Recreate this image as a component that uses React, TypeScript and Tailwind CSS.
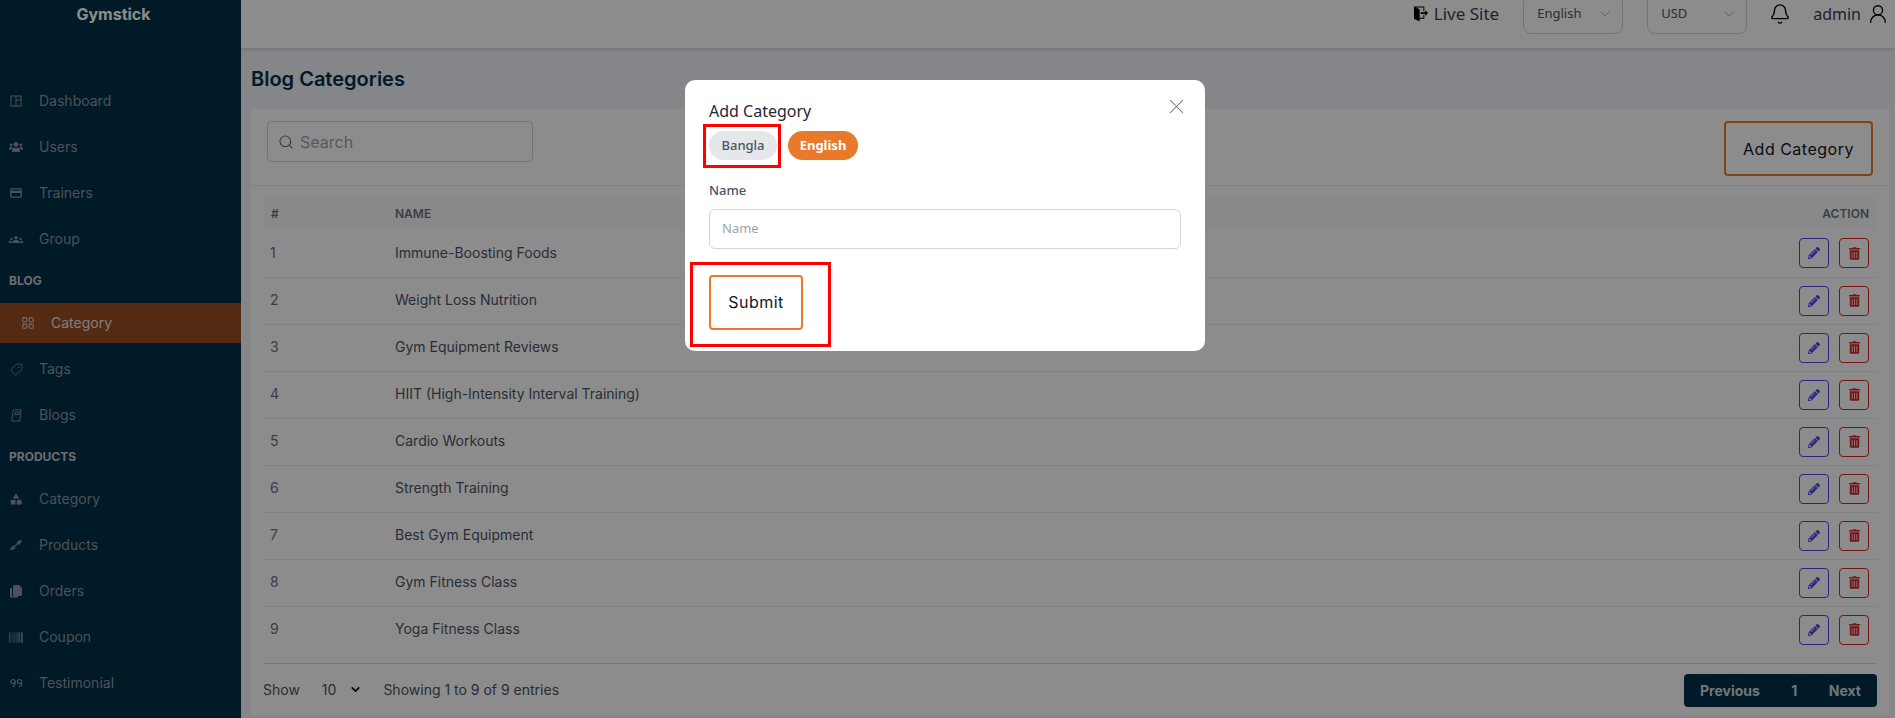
import React from 'react';
import { Bell, ChevronDown, LayoutGrid, Search, Tag, UserRound, X } from 'lucide-react';
import { FaBarcode, FaPencilAlt, FaTrashAlt, FaUsers } from 'react-icons/fa';
import { ImExit } from 'react-icons/im';
import { MdCategory, MdCreditCard, MdGroups } from 'react-icons/md';

function DashIcon() {
  return (
    <svg viewBox="0 0 12 12" className="w-[12px] h-[12px]" fill="none" stroke="currentColor" strokeWidth="1">
      <rect x="1" y="1" width="10" height="10" />
      <path d="M6 1v10M6 5h5" />
    </svg>
  );
}

function BlogIcon() {
  return (
    <svg viewBox="0 0 14 14" className="w-[13px] h-[13px]" fill="none" stroke="currentColor" strokeWidth="1">
      <path d="M3.500 1h8.500l-1.500 12h-8.500l1-8zM5.500 3.500h4.500l-.3 2.500h-4.500z" />
    </svg>
  );
}

function BarbellIcon() {
  return (
    <svg viewBox="0 0 14 14" className="w-[14px] h-[14px]" fill="none" stroke="currentColor" strokeWidth="1.2">
      <path d="M1 12L13 2M3 8l3 3M2 9.500l2 2.500M8 3.500l3 3M9.500 2.500l2.500 2.500" />
    </svg>
  );
}

function OrdersIcon() {
  return (
    <svg viewBox="0 0 14 14" className="w-[14px] h-[14px]" fill="currentColor">
      <path d="M5 1h5l3 3v7a1 1 0 0 1-1 1H5a1 1 0 0 1-1-1V2a1 1 0 0 1 1-1z" />
      <path d="M1 4h2v8h6v1.500H2a1 1 0 0 1-1-1z" />
    </svg>
  );
}

function QuoteIcon() {
  return (
    <svg viewBox="0 0 14 10" className="w-[13px] h-[10px]" fill="none" stroke="currentColor" strokeWidth="1.2">
      <path d="M5.500 3.500a2 2 0 1 1-4.500 0a2 2 0 0 1 4.500 0v2c0 1.500-1 3-2.500 3.500M12.500 3.500a2 2 0 1 1-4.500 0a2 2 0 0 1 4.500 0v2c0 1.500-1 3-2.500 3.500" />
    </svg>
  );
}

function NavRow({ icon, label }: { icon: React.ReactNode; label: string }) {
  return (
    <div className="h-[46px] flex items-center pl-[9px]">
      <span className="w-[14px] flex justify-center shrink-0">{icon}</span>
      <span className="ml-[16px] pb-[1px] text-[14px] text-[#8a96a3]">{label}</span>
    </div>
  );
}

function SectionLabel({ label, h }: { label: string; h: string }) {
  return <div className={`${h} flex items-center pl-[9px] text-[12px] font-bold text-[#c4c8cc]`}>{label}</div>;
}

function Sidebar() {
  return (
    <aside className="w-[241px] shrink-0 h-full bg-[#003049] text-[#8a96a3] overflow-hidden">
      <div className="h-[28px] flex items-center justify-center pr-[14px] text-[16px] font-bold text-white">Gymstick</div>
      <div className="h-[50px]" />
      <NavRow icon={<DashIcon />} label="Dashboard" />
      <NavRow icon={<FaUsers className="w-[14px] h-[14px]" />} label="Users" />
      <NavRow icon={<MdCreditCard className="w-[14px] h-[14px]" />} label="Trainers" />
      <NavRow icon={<MdGroups className="w-[15px] h-[15px]" />} label="Group" />
      <SectionLabel label="BLOG" h="h-[41px] pb-[3px]" />
      <div className="h-[40px] mb-[3px] flex items-center pl-[21px] bg-[#9a4e21] text-[#e6e6e6]">
        <LayoutGrid className="w-[14px] h-[14px]" strokeWidth={1.5} />
        <span className="ml-[16px] pb-[1px] text-[14px]">Category</span>
      </div>
      <NavRow icon={<Tag className="w-[13px] h-[13px] rotate-[90deg]" strokeWidth={1.5} />} label="Tags" />
      <NavRow icon={<BlogIcon />} label="Blogs" />
      <SectionLabel label="PRODUCTS" h="h-[38px] pb-[1px]" />
      <NavRow icon={<MdCategory className="w-[14px] h-[14px]" />} label="Category" />
      <NavRow icon={<BarbellIcon />} label="Products" />
      <NavRow icon={<OrdersIcon />} label="Orders" />
      <NavRow icon={<FaBarcode className="w-[15px] h-[15px]" />} label="Coupon" />
      <NavRow icon={<QuoteIcon />} label="Testimonial" />
    </aside>
  );
}

function SelectBox({ label }: { label: string }) {
  return (
    <div className="w-[100px] h-[40px] shrink-0 flex items-center justify-between pl-[13px] pr-[9px] border border-[#d1d5db] rounded-[8px] bg-white font-['Noto_Sans',sans-serif] text-[13px] text-[#4b5563]">
      <span>{label}</span>
      <ChevronDown className="w-[16px] h-[16px] text-[#9ca3af]" strokeWidth={1.25} />
    </div>
  );
}

function Header() {
  return (
    <header className="h-[49px] shrink-0 bg-white border-b border-[#d8dadd] shadow-sm pb-[21px] pr-[6px] flex items-center justify-end font-['Noto_Sans',sans-serif]">
      <ImExit className="w-[15px] h-[16px] text-black" />
      <span className="ml-[5px] text-[17px] text-[#374151]">Live Site</span>
      <div className="ml-[24px]"><SelectBox label="English" /></div>
      <div className="ml-[24px]"><SelectBox label="USD" /></div>
      <Bell className="ml-[22px] w-[22px] h-[22px] text-black" strokeWidth={1.5} />
      <span className="ml-[22px] text-[16px] text-[#374151]">admin</span>
      <UserRound className="ml-[6px] w-[22px] h-[22px] text-black" strokeWidth={1.5} />
    </header>
  );
}

const rows = [
  'Immune-Boosting Foods',
  'Weight Loss Nutrition',
  'Gym Equipment Reviews',
  'HIIT (High-Intensity Interval Training)',
  'Cardio Workouts',
  'Strength Training',
  'Best Gym Equipment',
  'Gym Fitness Class',
  'Yoga Fitness Class',
];

function CategoryTable() {
  return (
    <table className="w-full table-fixed border-collapse text-[14px] text-[#4b5563]">
      <thead>
        <tr className="h-[32px] bg-[#f9fafb] text-[12px] font-semibold text-[#6b7280]">
          <th className="w-[132px] pl-[8px] text-left font-semibold">#</th>
          <th className="text-left font-semibold">NAME</th>
          <th className="w-[200px] pr-[8px] text-right font-semibold">ACTION</th>
        </tr>
      </thead>
      <tbody>
        {rows.map((name, i) => (
          <tr key={name} className={`h-[47px] ${i < rows.length - 1 ? 'border-b border-[#eceef1]' : ''}`}>
            <td className="pl-[7px] pb-[2px] text-[#6b7280]">{i + 1}</td>
            <td className="pb-[2px]">{name}</td>
            <td className="pr-[8px]">
              <div className="flex justify-end gap-[10px]">
                <button className="w-[30px] h-[30px] flex items-center justify-center border border-[#4f46e5] rounded-[4px] text-[#4f46e5]">
                  <FaPencilAlt className="w-[12px] h-[12px]" />
                </button>
                <button className="w-[30px] h-[30px] flex items-center justify-center border border-[#dc2626] rounded-[4px] text-[#dc2626]">
                  <FaTrashAlt className="w-[11px] h-[13px]" />
                </button>
              </div>
            </td>
          </tr>
        ))}
      </tbody>
    </table>
  );
}

function Main() {
  return (
    <div className="flex-1 min-w-0 h-full flex flex-col bg-[#f1f5f9]">
      <Header />
      <div className="pl-[10px] pr-[6px]">
        <h1 className="h-[60px] flex items-center text-[20px] font-semibold text-[#003049]">Blog Categories</h1>
        <section className="bg-white">
          <div className="h-[77px] border-b border-[#eceef1] flex justify-between pt-[12px] pl-[16px] pr-[16px]">
            <div className="w-[266px] h-[41px] flex items-center pl-[10px] border border-[#d1d5db] rounded-[4px]">
              <Search className="w-[16px] h-[16px] text-[#6b7280]" strokeWidth={1.75} />
              <span className="ml-[6px] text-[16px] text-[#9ca3af]">Search</span>
            </div>
            <button className="w-[149px] h-[55px] border-2 border-[#e97a2b] rounded-[4px] text-[16px] font-normal tracking-[0.5px] text-[#111827]">Add Category</button>
          </div>
          <div className="px-[12px] pt-[12px]">
            <CategoryTable />
            <div className="h-[11px] border-b border-[#d8dadd]" />
            <div className="h-[52px] flex items-center justify-between text-[14px] text-[#4b5563]">
              <div className="flex items-center pb-[1px]">
                <span>Show</span>
                <span className="ml-[22px]">10</span>
                <ChevronDown className="ml-[13px] w-[13px] h-[13px] text-black" strokeWidth={3} />
                <span className="ml-[21px]">Showing 1 to 9 of 9 entries</span>
              </div>
              <div className="w-[193px] h-[33px] flex items-center justify-between px-[16px] bg-[#003049] rounded-[4px] text-[14px] font-bold text-[#cfd8dc]">
                <span>Previous</span>
                <span>1</span>
                <span>Next</span>
              </div>
            </div>
          </div>
        </section>
      </div>
    </div>
  );
}

function Modal() {
  return (
    <div className="absolute inset-0 bg-black/45 flex justify-center items-start pt-[80px] pr-[5px]">
      <div className="relative w-[520px] h-[271px] bg-white rounded-[10px] px-[24px] pt-[21px] font-['Noto_Sans',sans-serif]">
        <h3 className="text-[16px] leading-[20px] font-normal text-[#1f2937]">Add Category</h3>
        <X className="absolute top-[14px] right-[16px] w-[25px] h-[25px] text-[#6b7280]" strokeWidth={1} />
        <div className="mt-[10px] flex gap-[11px]">
          <span className="relative w-[68px] h-[29px] flex items-center justify-center rounded-full bg-[#e5e7eb] text-[13px] font-medium text-[#4b5563]">
            Bangla
            <span className="absolute -left-[6px] -right-[4px] -top-[7px] -bottom-[8px] border-[3px] border-[#ff0000]" />
          </span>
          <span className="w-[70px] h-[29px] flex items-center justify-center rounded-full bg-[#e97a2b] text-[13px] font-bold text-white">English</span>
        </div>
        <label className="block mt-[21px] text-[13px] leading-[18px] font-medium text-[#4b5563]">Name</label>
        <div className="mt-[10px] h-[40px] flex items-center px-[12px] border border-[#d1d5db] rounded-[6px] text-[13px] text-[#9ca3af]">Name</div>
        <div className="relative mt-[26px] w-[94px] h-[55px]">
          <button className="w-full h-full pb-[2px] border-2 border-[#e97a2b] rounded-[4px] font-['Inter',sans-serif] text-[16px] font-normal tracking-[0.5px] text-[#111827]">Submit</button>
          <span className="absolute -left-[19px] -right-[28px] -top-[13px] -bottom-[17px] border-[3px] border-[#ff0000]" />
        </div>
      </div>
    </div>
  );
}

export default function App() {
  return (
    <div className="relative w-full h-screen flex overflow-hidden font-['Inter',sans-serif]">
      <Sidebar />
      <Main />
      <Modal />
    </div>
  );
}
